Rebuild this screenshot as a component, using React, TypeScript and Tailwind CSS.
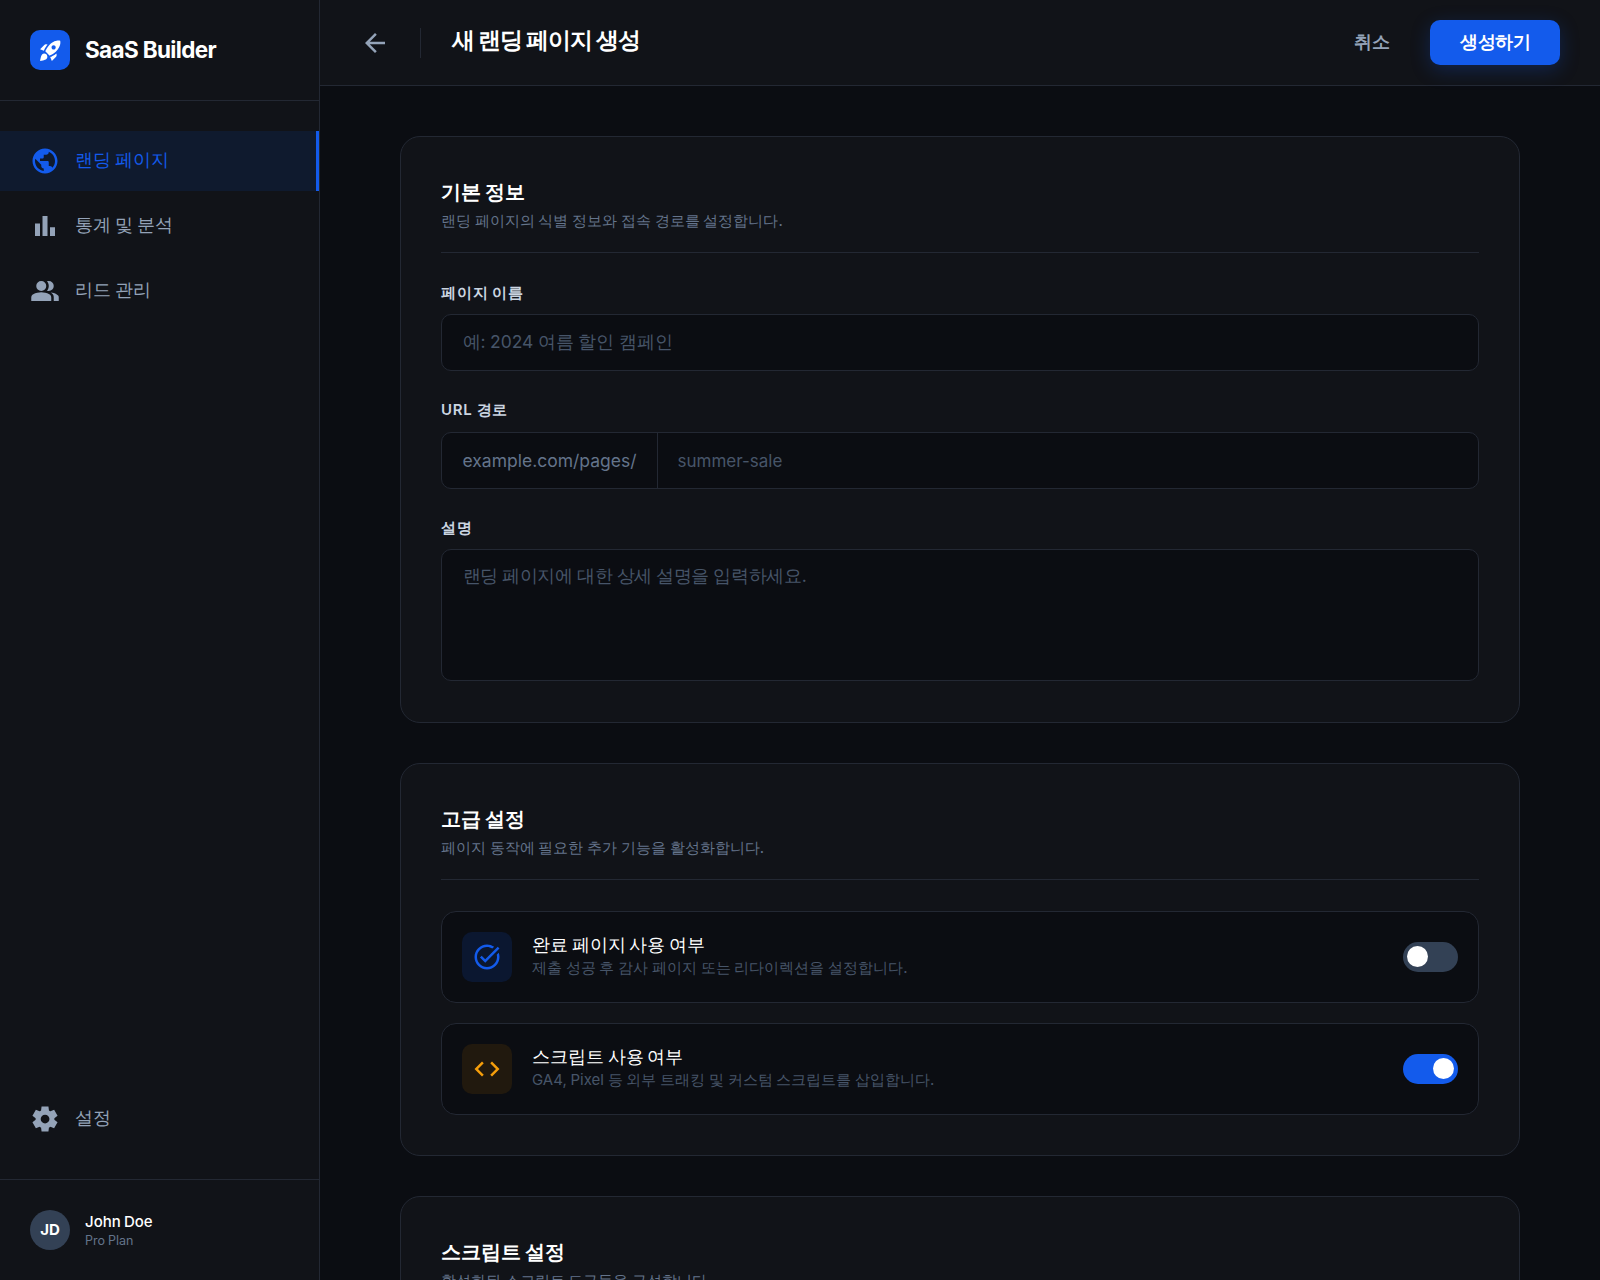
import React from 'react';
import { MdPublic, MdRocketLaunch, MdArrowBack, MdTaskAlt, MdCode } from 'react-icons/md';

function SymbolIcon({ d, size = 30 }: { d: string; size?: number }) {
    return (
        <svg width={size} height={size} viewBox="0 -960 960 960" fill="currentColor">
            <path d={d} />
        </svg>
    );
}

const BarChartIcon = () => <SymbolIcon d="M640-160v-280h160v280H640Zm-240 0v-640h160v640H400Zm-240 0v-400h160v400H160Z" />;
const GroupIcon = () => <SymbolIcon d="M40-160v-112q0-34 17.5-62.5T104-378q62-31 126-46.5T360-440q66 0 130 15.5T616-378q29 15 46.5 43.5T680-272v112H40Zm720 0v-120q0-44-24.5-84.5T666-434q51 6 96 20.5t84 35.5q36 20 55 44.5t19 53.5v120H760ZM360-480q-66 0-113-47t-47-113q0-66 47-113t113-47q66 0 113 47t47 113q0 66-47 113t-113 47Zm400-160q0 66-47 113t-113 47q-11 0-28-2.5t-28-5.5q27-32 41.5-71t14.5-81q0-42-14.5-81T544-792q14-5 28-6.5t28-1.5q66 0 113 47t47 113Z" />;
const SettingsIcon = () => <SymbolIcon d="m370-80-16-128q-13-5-24.5-12T307-235l-119 50L78-375l103-78q-1-7-1-13.5v-27q0-6.5 1-13.5L78-585l110-190 119 50q11-8 23-15t24-12l16-128h220l16 128q13 5 24.5 12t22.5 15l119-50 110 190-103 78q1 7 1 13.5v27q0 6.5-2 13.5l103 78-110 190-118-50q-11 8-23 15t-24 12L590-80H370Zm112-260q58 0 99-41t41-99q0-58-41-99t-99-41q-59 0-99.5 41T342-480q0 58 40.5 99t99.5 41Z" />;

const navItems = [
    { label: '랜딩 페이지', icon: <MdPublic size={30} />, active: true },
    { label: '통계 및 분석', icon: <BarChartIcon />, active: false },
    { label: '리드 관리', icon: <GroupIcon />, active: false },
];

function NavItem({ label, icon, active }: { label: string; icon: React.ReactNode; active?: boolean }) {
    return (
        <div className={`flex items-center gap-[15px] h-[60px] px-[30px] text-[17.5px] ${active ? 'bg-[#0f1a2e] text-[#135bec] border-r-[3px] border-[#135bec]' : 'text-[#94a3b8]'}`}>
            {icon}
            <span className="mb-[2px] [word-spacing:-0.05em]">{label}</span>
        </div>
    );
}

function SectionCard({ title, desc, children }: { title: string; desc: string; children?: React.ReactNode }) {
    return (
        <section className="bg-[#111318] border border-[#232833] rounded-[20px] p-10 shrink-0">
            <div className="pb-[19px] border-b border-[#232833] mb-[29px]">
                <h2 className="text-[20px] leading-[30px] font-bold text-white">{title}</h2>
                <p className="text-[15px] leading-[22.5px] mt-[3px] text-[#64748b]">{desc}</p>
            </div>
            {children}
        </section>
    );
}

function Label({ children }: { children: React.ReactNode }) {
    return <label className="block text-[15px] leading-[22.5px] font-semibold tracking-[0.75px] text-[#cbd5e1] mb-[10px]">{children}</label>;
}

function Toggle({ on }: { on?: boolean }) {
    return (
        <div className={`w-[55px] h-[30px] rounded-full flex items-center px-[4px] ${on ? 'bg-[#135bec] justify-end' : 'bg-[#334155] justify-start'}`}>
            <div className="w-[21px] h-[21px] rounded-full bg-white" />
        </div>
    );
}

function OptionRow({ title, desc, icon, tile, on }: { title: string; desc: string; icon: React.ReactNode; tile: string; on?: boolean }) {
    return (
        <div className="flex items-center justify-between h-[92px] pl-5 pr-[20.5px] bg-[#0b0d12] border border-[#232833] rounded-[15px]">
            <div className="flex items-center gap-5">
                <div className={`w-[50px] h-[50px] rounded-[10px] flex items-center justify-center ${tile}`}>{icon}</div>
                <div className="mb-[2px]">
                    <p className="text-[17.5px] leading-[24px] font-medium text-white [word-spacing:-0.06em]">{title}</p>
                    <p className="text-[15px] leading-[22px] text-[#475569]">{desc}</p>
                </div>
            </div>
            <Toggle on={on} />
        </div>
    );
}

export default function App() {
    return (
        <div className="flex h-screen overflow-hidden bg-[#0b0d12] font-['Inter',sans-serif] [word-spacing:-0.03em]">
            <aside className="w-[320px] shrink-0 flex flex-col bg-[#111318] border-r border-[#232833]">
                <div className="flex items-center gap-[15px] p-[30px] border-b border-[#232833]">
                    <div className="w-10 h-10 rounded-[10px] bg-[#135bec] flex items-center justify-center text-white">
                        <MdRocketLaunch size={25} />
                    </div>
                    <span className="text-[22.5px] font-bold tracking-[-0.65px] text-white [word-spacing:0]">SaaS Builder</span>
                </div>
                <nav className="flex flex-col gap-[5px] pt-[30px] flex-1">
                    {navItems.map(item => <NavItem key={item.label} {...item} />)}
                </nav>
                <div className="pb-[30px]">
                    <NavItem label="설정" icon={<SettingsIcon />} />
                </div>
                <div className="flex items-center gap-[15px] p-[30px] border-t border-[#232833]">
                    <div className="w-10 h-10 rounded-full bg-[#334155] flex items-center justify-center text-[15px] font-bold text-white">JD</div>
                    <div>
                        <p className="text-[15px] leading-[20px] font-medium text-white [word-spacing:-0.05em]">John Doe</p>
                        <p className="text-[12.5px] leading-[17px] text-[#64748b]">Pro Plan</p>
                    </div>
                </div>
            </aside>

            <main className="flex-1 flex flex-col min-w-0">
                <header className="h-[86px] shrink-0 flex items-center justify-between pl-10 pr-10 bg-[#111318] border-b border-[#232833]">
                    <div className="flex items-center gap-[30px]">
                        <MdArrowBack size={30} className="text-[#94a3b8]" />
                        <div className="w-px h-[30px] bg-[#232833]" />
                        <h1 className="ml-[0.5px] mb-[5px] text-[22.5px] font-bold tracking-[-1.05px] text-white [word-spacing:0]">새 랜딩 페이지 생성</h1>
                    </div>
                    <div className="flex items-center gap-5">
                        <span className="px-5 text-[17.5px] font-semibold text-[#94a3b8]">취소</span>
                        <button className="h-[45px] px-[30px] rounded-[10px] bg-[#135bec] text-[17.5px] font-bold tracking-[-0.5px] text-white shadow-[0_5px_19px_rgba(19,91,236,0.25)]">생성하기</button>
                    </div>
                </header>

                <div className="flex-1 overflow-hidden flex flex-col gap-10 px-20 pt-[50px]">
                    <SectionCard title="기본 정보" desc="랜딩 페이지의 식별 정보와 접속 경로를 설정합니다.">
                        <div className="flex flex-col gap-[28px] pb-px">
                            <div>
                                <Label>페이지 이름</Label>
                                <div className="h-[57px] flex items-center pl-[20.5px] pr-5 bg-[#0b0d12] border border-[#232833] rounded-[10px] text-[17.5px] text-[#475569]">예: 2024 여름 할인 캠페인</div>
                            </div>
                            <div>
                                <Label>URL 경로</Label>
                                <div className="h-[57px] flex items-center bg-[#0b0d12] border border-[#232833] rounded-[10px] text-[17.5px]">
                                    <span className="h-full flex items-center pl-[20.5px] pr-5 pt-[2px] border-r border-[#232833] text-[#64748b]">example.com/pages/</span>
                                    <span className="px-5 pt-[3px] text-[17px] text-[#475569]">summer-sale</span>
                                </div>
                            </div>
                            <div>
                                <Label>설명</Label>
                                <div className="h-[132px] pl-[20.5px] pr-5 py-[13px] bg-[#0b0d12] border border-[#232833] rounded-[10px] text-[17.5px] tracking-[-0.3px] leading-[26px] text-[#475569]">랜딩 페이지에 대한 상세 설명을 입력하세요.</div>
                            </div>
                        </div>
                    </SectionCard>

                    <SectionCard title="고급 설정" desc="페이지 동작에 필요한 추가 기능을 활성화합니다.">
                        <div className="flex flex-col gap-5 pt-[2px]">
                            <OptionRow
                                title="완료 페이지 사용 여부"
                                desc="제출 성공 후 감사 페이지 또는 리다이렉션을 설정합니다."
                                tile="bg-[#0b1730]"
                                icon={<MdTaskAlt size={30} className="text-[#135bec]" />}
                            />
                            <OptionRow
                                title="스크립트 사용 여부"
                                desc="GA4, Pixel 등 외부 트래킹 및 커스텀 스크립트를 삽입합니다."
                                tile="bg-[#21190e]"
                                icon={<MdCode size={30} className="text-[#f59e0b]" />}
                                on
                            />
                        </div>
                    </SectionCard>

                    <SectionCard title="스크립트 설정" desc="활성화된 스크립트 도구들을 구성합니다." />
                </div>
            </main>
        </div>
    );
}
